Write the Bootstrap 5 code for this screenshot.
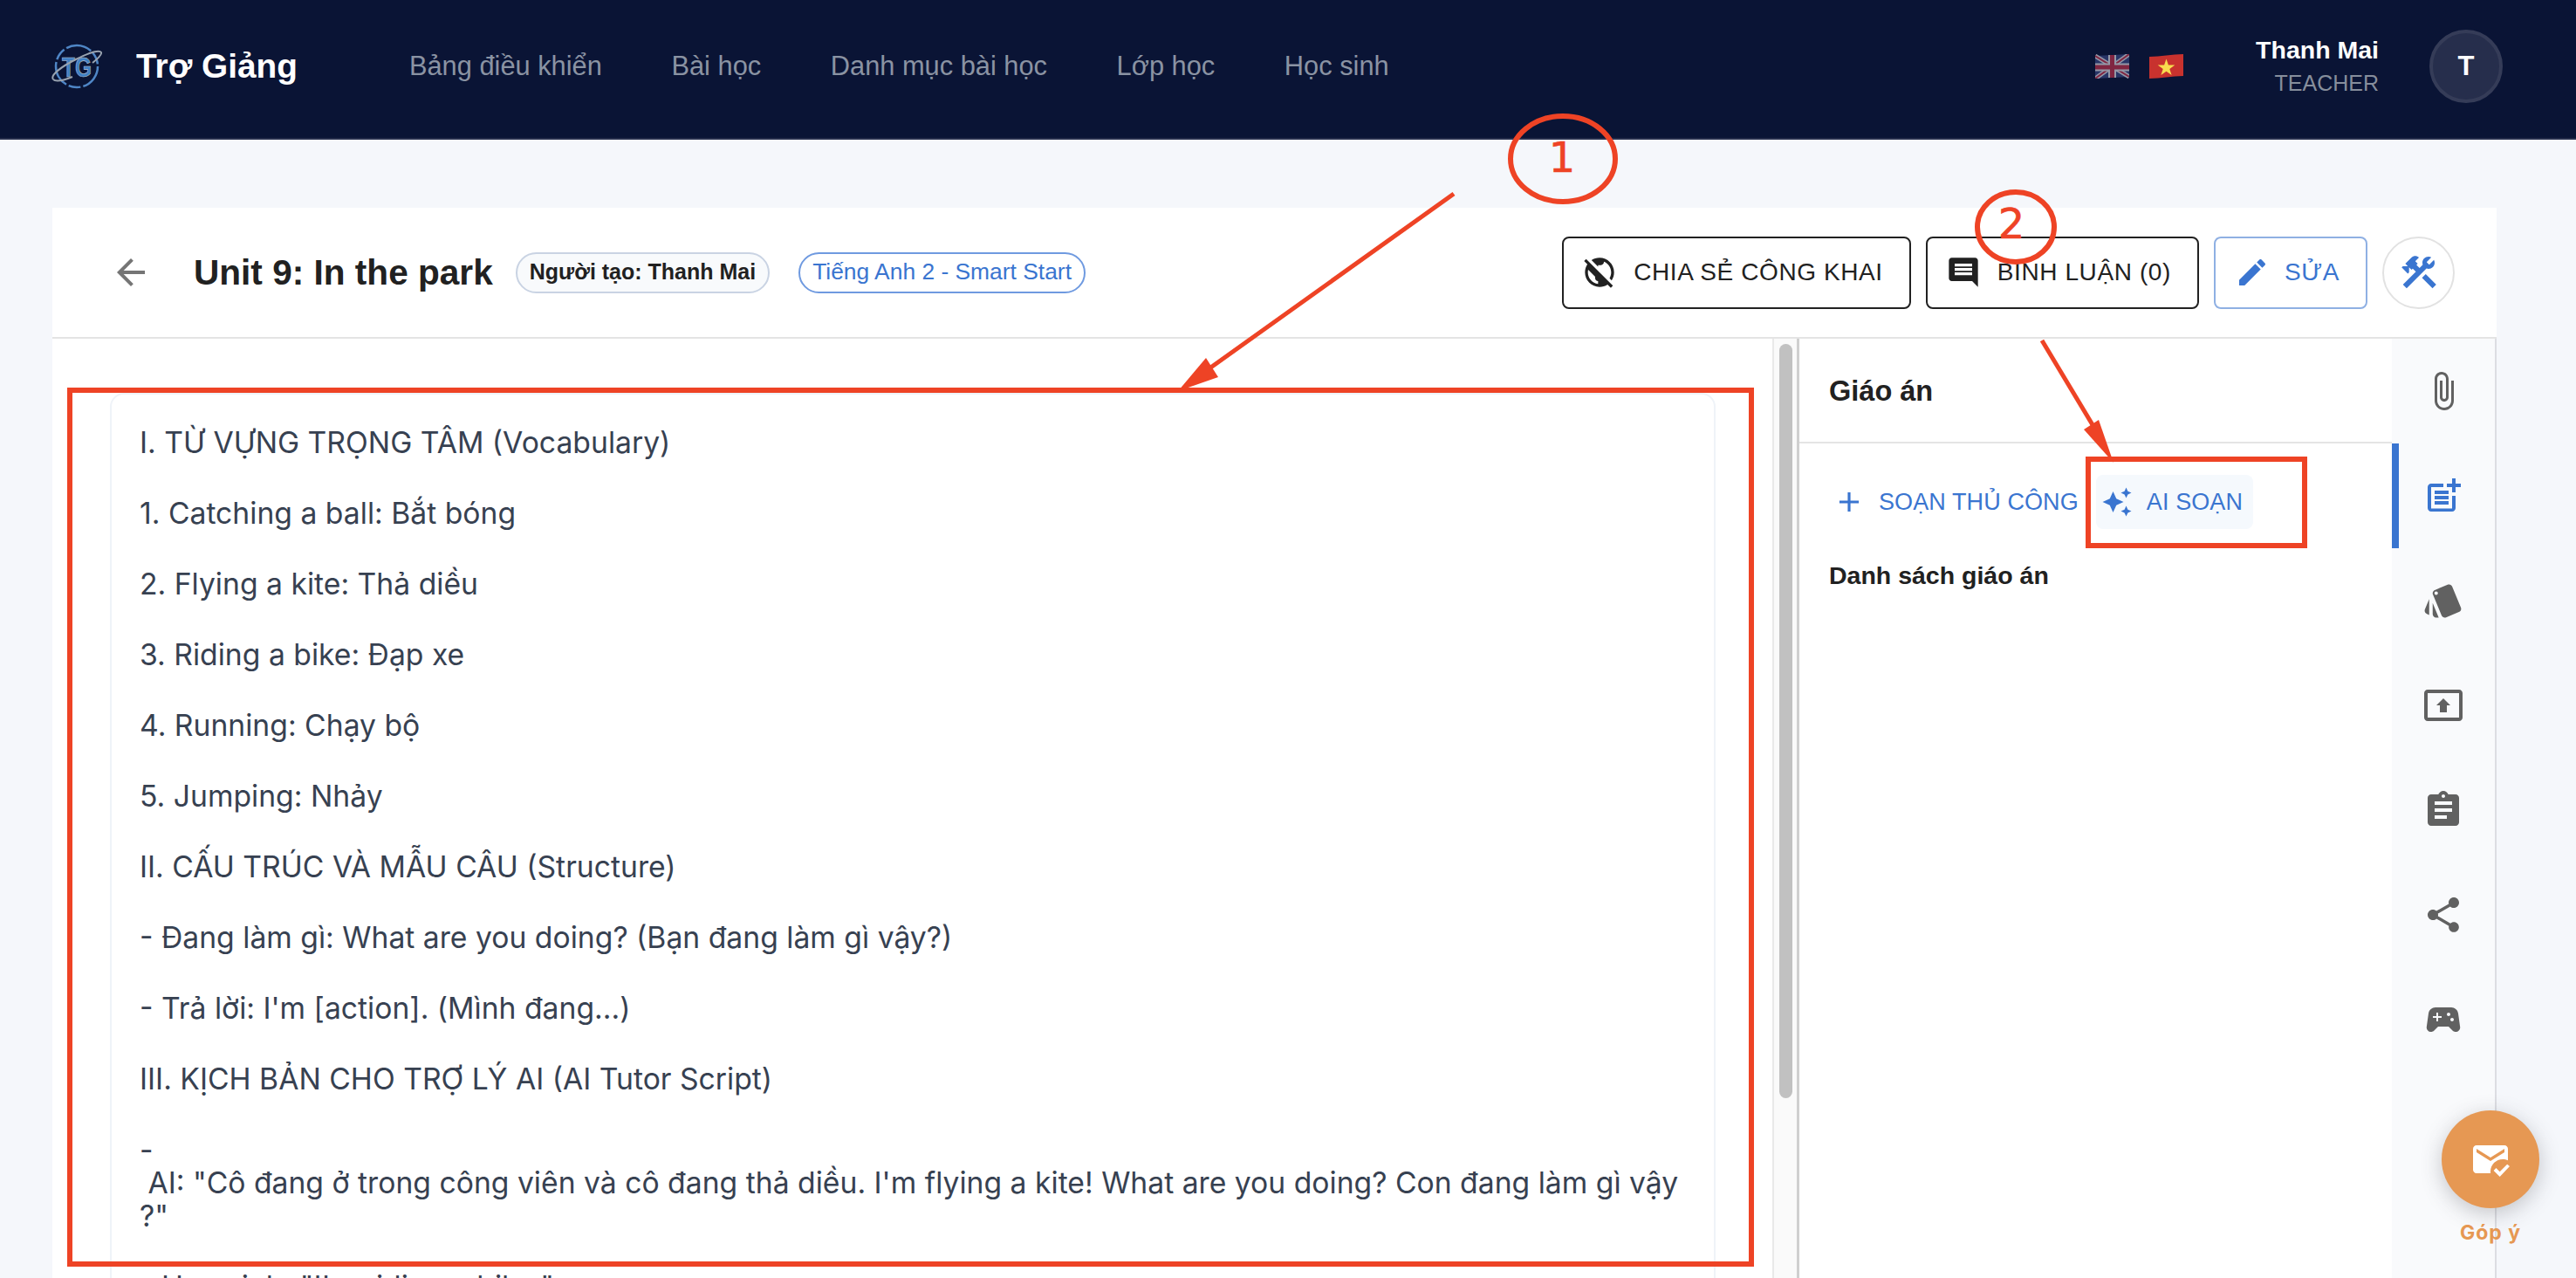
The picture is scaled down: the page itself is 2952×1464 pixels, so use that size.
<!doctype html>
<html lang="en">
<head>
<meta charset="utf-8">
<title>Trợ Giảng – Unit 9</title>
<link href="https://cdn.jsdelivr.net/npm/bootstrap@5.3.3/dist/css/bootstrap.min.css" rel="stylesheet">
<style>
    html, body { height: 1464px; overflow: hidden; }
    body { background: #f5f7fb; font-family: "Liberation Sans", Arial, sans-serif; color: #212121; position: relative; }
    svg { display: block; fill: currentColor; flex-shrink: 0; }

    /* top bar */
    .topbar { height: 160px; background: #0a1435; border-bottom: 2px solid #262e4c; padding: 0 84px 6px 59px; }
    .brand-name { font-size: 38.8px; font-weight: 700; color: #fff; margin-left: 39px; margin-right: 128px; }
    .menu-links { gap: 79.6px; }
    .menu-links a { font-size: 30.8px; color: #8a93a3; text-decoration: none; }
    .flags { gap: 23px; margin-right: 83px; }
    .who { margin-right: 58px; text-align: right; }
    .who-name { font-size: 28.5px; font-weight: 700; color: #fff; line-height: 38px; }
    .who-role { font-size: 25px; color: #868e9c; line-height: 38px; }
    .avatar { width: 84px; height: 84px; border-radius: 50%; background: #262e4c; border: 4px solid #353c58; color: #fff; font-size: 31px; font-weight: 700; }

    /* lesson card */
    .lesson-wrap { padding: 78px 91px 0 60px; }
    .lesson-head { height: 150px; background: #fff; border-bottom: 2px solid #e4e4e4; padding: 0 48px 0 66px; }
    .back-arrow { color: #757575; width: 48px; height: 48px; }
    .lesson-title { font-size: 40.6px; font-weight: 700; margin: 0 26px 0 48px; }
    .tag-pill { height: 47px; border-radius: 24px; display: flex; align-items: center; padding: 0 14px; border: 2px solid; }
    .tag-owner { background: #f8fafc; border-color: #c9d3e3; font-size: 25px; font-weight: 700; color: #212121; margin-right: 33px; }
    .tag-book { border-color: #6f9ae0; font-size: 26.4px; color: #3a75d0; }
    .act-row { gap: 17px; }
    .act-btn { height: 83px; border-radius: 8px; border: 2px solid #212121; background: #fff; font-size: 28px; letter-spacing: .6px; color: #212121; display: flex; align-items: center; gap: 19px; padding: 0 30px 0 21px; }
    .act-edit { border-color: #8fb0e3; color: #3a75d0; gap: 17px; padding-left: 22px; }
    .act-tools { width: 83px; border-color: #e2e2e2; color: #3a75d0; border-radius: 50%; padding: 0; justify-content: center; }

    .lesson-body { height: 1076px; background: #fff; }
    .doc-pane { width: 1971px; flex-shrink: 0; padding: 62px 65px 0 66px; overflow: hidden; }
    .doc-box { border: 2px solid #eff3f8; border-radius: 16px; padding: 36px 32px 0; height: 1200px; font-family: Inter, sans-serif; font-size: 33.7px; line-height: 38px; color: #374151; }
    .doc-box p { margin: 0 0 43px; }
    .scroll-track { width: 31px; flex-shrink: 0; background: #fafafa; border-left: 2px solid #e9e9e9; border-right: 3px solid #cfcfcf; padding: 6px 5px 0 6px; }
    .scroll-thumb { height: 864px; background: #c1c1c1; border-radius: 8px; }
    .side-panel { width: 0; }
    .side-head { height: 120px; border-bottom: 2px solid #e4e4e4; padding: 2px 0 0 34px; font-size: 32.5px; font-weight: 700; }
    .side-tools { height: 96px; margin-top: 19px; padding-left: 38px; }
    .soan-link { font-size: 27px; color: #3a75d0; letter-spacing: .1px; display: flex; align-items: center; }
    .soan-plus { margin-right: 15px; }
    .soan-ai { height: 62px; background: #f5f9fd; border-radius: 8px; margin-left: 20px; padding: 0 12px 0 6px; }
    .list-title { font-size: 28.5px; font-weight: 700; padding-left: 34px; margin-top: 15px; }
    .tool-rail { width: 120px; flex-shrink: 0; background: #f9fafc; border-right: 2px solid #dcdde2; }
    .rail-item { height: 120px; color: #616161; }
    .rail-active { color: #3a75d0; box-shadow: inset 8px 0 0 #3a75d0; }

    /* feedback button + annotations lie over the page */
    .feedback { position: absolute; left: 2798px; top: 1272px; width: 112px; text-align: center; }
    .feedback-dot { width: 112px; height: 112px; border-radius: 50%; background: #e69853; color: #fff; box-shadow: 0 6px 24px rgba(60,60,70,.28); }
    .feedback-label { font-family: Inter, sans-serif; font-size: 23px; font-weight: 700; letter-spacing: 1px; color: #e69853; margin-top: 15px; line-height: 26px; }
    .marks { position: absolute; left: 0; top: 0; pointer-events: none; }
    .marks text { font-family: "DejaVu Sans", sans-serif; font-size: 48px; fill: #ee4325; stroke: #ee4325; stroke-width: .6px; }
</style>
</head>
<body>

<!-- top bar -->
<nav class="topbar d-flex align-items-center">
    <svg width="58" height="52" viewBox="0 0 58 52" fill="none">
        <circle cx="29" cy="26" r="24" fill="none" stroke="#4f86c6" stroke-width="2.5" stroke-dasharray="30 3 14 3"/>
        <text x="29" y="38" text-anchor="middle" font-family="Liberation Sans" font-weight="700" font-size="32" textLength="34" lengthAdjust="spacingAndGlyphs" fill="#3f7fc4" stroke="#b9c3cf" stroke-width=".6">TG</text>
        <path d="M2 41C-2 36 12 26 28 18 44 10 55 7 57 10 58 13 52 18 47 22" fill="none" stroke="#99a3b0" stroke-width="2"/>
        <path d="M2 41C5 44 14 42 24 38" fill="none" stroke="#99a3b0" stroke-width="2"/>
    </svg>
    <span class="brand-name">Trợ Giảng</span>
    <div class="menu-links d-flex">
        <a href="#">Bảng điều khiển</a>
        <a href="#">Bài học</a>
        <a href="#">Danh mục bài học</a>
        <a href="#">Lớp học</a>
        <a href="#">Học sinh</a>
    </div>
    <div class="ms-auto d-flex align-items-center">
        <div class="flags d-flex">
            <svg width="39" height="28" viewBox="0 0 39 28" opacity=".62">
                <path d="M0 2 39 0V26L0 28Z" fill="#3b4a86"/>
                <path d="M0 2 39 26M39 0 0 28" stroke="#e9e9ee" stroke-width="5"/>
                <path d="M0 2 39 26M39 0 0 28" stroke="#c8324a" stroke-width="2"/>
                <path d="M19.5 1V27M0 15H39" stroke="#e9e9ee" stroke-width="9"/>
                <path d="M19.5 1V27M0 15H39" stroke="#c8324a" stroke-width="5"/>
            </svg>
            <svg width="39" height="28" viewBox="0 0 39 28">
                <path d="M0 3C13 3 26 0 39 0V25C26 25 13 28 0 28Z" fill="#c8322e"/>
                <path d="M19.5 5.5 21.9 12.6H29.3L23.3 17 25.6 24 19.5 19.7 13.4 24 15.7 17 9.7 12.6H17.1Z" fill="#f8dd4e"/>
            </svg>
        </div>
        <div class="who">
            <div class="who-name">Thanh Mai</div>
            <div class="who-role">TEACHER</div>
        </div>
        <div class="avatar d-flex align-items-center justify-content-center">T</div>
    </div>
</nav>

<!-- lesson -->
<div class="lesson-wrap">
    <div class="lesson-head d-flex align-items-center">
        <svg class="back-arrow" viewBox="0 0 24 24"><path d="M20 11H7.83l5.59-5.59L12 4l-8 8 8 8 1.41-1.41L7.83 13H20v-2z"/></svg>
        <span class="lesson-title">Unit 9: In the park</span>
        <span class="tag-pill tag-owner">Người tạo: Thanh Mai</span>
        <span class="tag-pill tag-book">Tiếng Anh 2 - Smart Start</span>
        <div class="ms-auto d-flex act-row">
            <button class="act-btn">
                <svg width="40" height="40" viewBox="0 0 24 24"><path d="M11 8.17L6.49 3.66C8.07 2.61 9.96 2 12 2c5.52 0 10 4.48 10 10 0 2.04-.61 3.93-1.66 5.51l-1.46-1.46C19.59 14.87 20 13.48 20 12c0-3.35-2.07-6.22-5-7.41V5c0 1.1-.9 2-2 2h-2v1.17zm10.19 13.02l-1.41 1.41-2.27-2.27C15.93 21.39 14.04 22 12 22 6.48 22 2 17.52 2 12c0-2.04.61-3.93 1.66-5.51L1.39 4.22 2.81 2.81l18.38 18.38zM11 18c-1.1 0-2-.9-2-2v-1l-4.79-4.79C4.08 10.79 4 11.38 4 12c0 4.08 3.05 7.44 7 7.93V18z"/></svg>
                CHIA SẺ CÔNG KHAI
            </button>
            <button class="act-btn">
                <svg width="40" height="40" viewBox="0 0 24 24"><path d="M21.99 4c0-1.1-.89-2-1.99-2H4c-1.1 0-2 .9-2 2v12c0 1.1.9 2 2 2h14l4 4-.01-18zM18 14H6v-2h12v2zm0-3H6V9h12v2zm0-3H6V6h12v2z"/></svg>
                BÌNH LUẬN (0)
            </button>
            <button class="act-btn act-edit">
                <svg width="40" height="40" viewBox="0 0 24 24"><path d="M3 17.25V21h3.75L17.81 9.94l-3.75-3.75L3 17.25zM20.71 7.04c.39-.39.39-1.02 0-1.41l-2.34-2.34c-.39-.39-1.02-.39-1.41 0l-1.83 1.83 3.75 3.75 1.83-1.83z"/></svg>
                SỬA
            </button>
            <button class="act-btn act-tools">
                <svg width="48" height="48" viewBox="0 0 24 24"><path d="M13.783 15.172l2.121-2.121 5.996 5.996-2.121 2.121z M17.5 10c1.93 0 3.5-1.57 3.5-3.5 0-.58-.16-1.12-.41-1.6l-2.7 2.7-1.49-1.49 2.7-2.7c-.48-.25-1.02-.41-1.6-.41C15.57 3 14 4.57 14 6.5c0 .41.08.8.21 1.16l-1.85 1.85-1.78-1.78.71-.71-1.41-1.41L12 3.49c-1.17-1.17-3.07-1.17-4.24 0L4.22 7.03l1.41 1.41H2.81l-.71.71 3.54 3.54.71-.71V9.15l1.41 1.41.71-.71 1.78 1.78-7.41 7.41 2.12 2.12L16.34 9.79c.36.13.75.21 1.16.21z"/></svg>
            </button>
        </div>
    </div>

    <div class="lesson-body d-flex">
        <div class="doc-pane">
            <div class="doc-box">
                <p>I. TỪ VỰNG TRỌNG TÂM (Vocabulary)</p>
                <p>1. Catching a ball: Bắt bóng</p>
                <p>2. Flying a kite: Thả diều</p>
                <p>3. Riding a bike: Đạp xe</p>
                <p>4. Running: Chạy bộ</p>
                <p>5. Jumping: Nhảy</p>
                <p>II. CẤU TRÚC VÀ MẪU CÂU (Structure)</p>
                <p>- Đang làm gì: What are you doing? (Bạn đang làm gì vậy?)</p>
                <p>- Trả lời: I'm [action]. (Mình đang...)</p>
                <p>III. KỊCH BẢN CHO TRỢ LÝ AI (AI Tutor Script)</p>
                <p>-<br>&nbsp;AI: "Cô đang ở trong công viên và cô đang thả diều. I'm flying a kite! What are you doing? Con đang làm gì vậy<br>?"</p>
                <p>- Học sinh: "I'm riding a bike."</p>
            </div>
        </div>
        <div class="scroll-track"><div class="scroll-thumb"></div></div>
        <div class="side-panel flex-grow-1">
            <div class="side-head d-flex align-items-center">Giáo án</div>
            <div class="side-tools d-flex align-items-center">
                <span class="soan-link">
                    <svg class="soan-plus" width="38" height="38" viewBox="0 0 24 24"><path d="M19 13h-6v6h-2v-6H5v-2h6V5h2v6h6v2z"/></svg>
                    SOẠN THỦ CÔNG
                </span>
                <span class="soan-link soan-ai">
                    <svg width="36" height="36" viewBox="0 0 24 24" class="me-3"><path d="M19 9l1.25-2.75L23 5l-2.75-1.25L19 1l-1.25 2.75L15 5l2.75 1.25L19 9zm-7.5.5L9 4 6.5 9.5 1 12l5.5 2.5L9 20l2.5-5.5L17 12l-5.5-2.5zM19 15l-1.25 2.75L15 19l2.75 1.25L19 23l1.25-2.75L23 19l-2.75-1.25L19 15z"/></svg>
                    AI SOẠN
                </span>
            </div>
            <div class="list-title">Danh sách giáo án</div>
        </div>
        <div class="tool-rail">
            <div class="rail-item d-flex align-items-center justify-content-center">
                <svg width="48" height="48" viewBox="0 0 24 24"><path d="M16.5 6v11.5c0 2.21-1.79 4-4 4s-4-1.79-4-4V5c0-1.38 1.12-2.5 2.5-2.5s2.5 1.12 2.5 2.5v10.5c0 .55-.45 1-1 1s-1-.45-1-1V6H10v9.5c0 1.38 1.12 2.5 2.5 2.5s2.5-1.12 2.5-2.5V5c0-2.21-1.79-4-4-4S7 2.79 7 5v12.5c0 3.04 2.46 5.5 5.5 5.5s5.5-2.46 5.5-5.5V6h-1.5z"/></svg>
            </div>
            <div class="rail-item rail-active d-flex align-items-center justify-content-center">
                <svg width="48" height="48" viewBox="0 0 24 24"><path d="M17 19.22H5V7h7V5H5c-1.1 0-2 .9-2 2v12c0 1.1.9 2 2 2h12c1.1 0 2-.9 2-2v-7h-2v7.22z"/><path d="M19 2h-2v3h-3c.01.01 0 2 0 2h3v2.99c.01.01 2 0 2 0V7h3V5h-3V2z"/><path d="M7 9h8v2H7zM7 12v2h8v-2h-3zM7 15h8v2H7z"/></svg>
            </div>
            <div class="rail-item d-flex align-items-center justify-content-center">
                <svg width="48" height="48" viewBox="0 0 24 24"><path d="M2.53 19.65l1.34.56v-9.03l-2.43 5.86c-.41 1.02.08 2.19 1.09 2.61zm19.5-3.7L17.07 3.98c-.31-.75-1.04-1.21-1.81-1.23-.26 0-.53.04-.79.15L7.1 5.95c-.75.31-1.21 1.03-1.23 1.8-.01.27.04.54.15.8l4.96 11.97c.31.76 1.05 1.22 1.83 1.23.26 0 .52-.05.77-.15l7.36-3.05c1.02-.42 1.51-1.59 1.09-2.6zM7.88 8.75c-.55 0-1-.45-1-1s.45-1 1-1 1 .45 1 1-.45 1-1 1zm-2 11c0 1.1.9 2 2 2h1.45l-3.45-8.34v6.34z"/></svg>
            </div>
            <div class="rail-item d-flex align-items-center justify-content-center">
                <svg width="48" height="48" viewBox="0 0 24 24"><path d="M21 3H3c-1.11 0-2 .89-2 2v14c0 1.11.89 2 2 2h18c1.11 0 2-.89 2-2V5c0-1.11-.89-2-2-2zm0 16.02H3V4.98h18v14.04zM10 12H8l4-4 4 4h-2v4h-4v-4z"/></svg>
            </div>
            <div class="rail-item d-flex align-items-center justify-content-center">
                <svg width="48" height="48" viewBox="0 0 24 24"><path d="M19 3h-4.18C14.4 1.84 13.3 1 12 1c-1.3 0-2.4.84-2.82 2H5c-1.1 0-2 .9-2 2v14c0 1.1.9 2 2 2h14c1.1 0 2-.9 2-2V5c0-1.1-.9-2-2-2zm-7 0c.55 0 1 .45 1 1s-.45 1-1 1-1-.45-1-1 .45-1 1-1zm2 14H7v-2h7v2zm3-4H7v-2h10v2zm0-4H7V7h10v2z"/></svg>
            </div>
            <div class="rail-item d-flex align-items-center justify-content-center">
                <svg width="48" height="48" viewBox="0 0 24 24"><path d="M18 16.08c-.76 0-1.44.3-1.96.77L8.91 12.7c.05-.23.09-.46.09-.7s-.04-.47-.09-.7l7.05-4.11c.54.5 1.25.81 2.04.81 1.66 0 3-1.34 3-3s-1.34-3-3-3-3 1.34-3 3c0 .24.04.47.09.7L8.04 9.81C7.5 9.31 6.79 9 6 9c-1.66 0-3 1.34-3 3s1.34 3 3 3c.79 0 1.5-.31 2.04-.81l7.12 4.16c-.05.21-.08.43-.08.65 0 1.61 1.31 2.92 2.92 2.92 1.61 0 2.92-1.31 2.92-2.92s-1.31-2.92-2.92-2.92z"/></svg>
            </div>
            <div class="rail-item d-flex align-items-center justify-content-center">
                <svg width="48" height="48" viewBox="0 0 24 24"><path d="M21.58 16.09l-1.09-7.66C20.21 6.46 18.52 5 16.53 5H7.47C5.48 5 3.79 6.46 3.51 8.43l-1.09 7.66C2.2 17.63 3.39 19 4.94 19c.68 0 1.32-.27 1.8-.75L9 16h6l2.25 2.25c.48.48 1.13.75 1.8.75 1.56 0 2.75-1.37 2.53-2.91zM11 11H9v2H8v-2H6v-1h2V8h1v2h2v1zm4-1c-.55 0-1-.45-1-1s.45-1 1-1 1 .45 1 1-.45 1-1 1zm2 3c-.55 0-1-.45-1-1s.45-1 1-1 1 .45 1 1-.45 1-1 1z"/></svg>
            </div>
        </div>
    </div>
</div>

<!-- floating feedback -->
<div class="feedback">
    <div class="feedback-dot d-flex align-items-center justify-content-center">
        <svg width="48" height="48" viewBox="0 0 24 24"><path d="M12 19c0-3.87 3.13-7 7-7 1.08 0 2.09.25 3 .68V6c0-1.1-.9-2-2-2H4c-1.1 0-2 .9-2 2v12c0 1.1.9 2 2 2h8.08c-.05-.33-.08-.66-.08-1zM4 6l8 5 8-5v2l-8 5-8-5V6zm13.34 16l-3.54-3.54 1.41-1.41 2.12 2.12 4.24-4.24L23 16l-5.66 6z"/></svg>
    </div>
    <div class="feedback-label">Góp ý</div>
</div>

<!-- red annotations drawn over the screenshot -->
<svg class="marks" width="2952" height="1464" viewBox="0 0 2952 1464" fill="none">
    <g stroke="#ee4325" fill="none">
        <ellipse cx="1791" cy="182" rx="60" ry="49" stroke-width="6"/>
        <ellipse cx="2310" cy="260" rx="44" ry="40" stroke-width="6"/>
        <rect x="80" y="447" width="1927" height="1001" stroke-width="6"/>
        <rect x="2393" y="526" width="248" height="99" stroke-width="6"/>
        <path d="M1666 222 1372 432" stroke-width="5"/>
        <path d="M2340 390 2412 510" stroke-width="5"/>
    </g>
    <path d="M1350 448 1382 410 1396 432Z" fill="#ee4325"/>
    <path d="M2422 530 2388 492 2405 481Z" fill="#ee4325"/>
    <text x="1790" y="197" text-anchor="middle">1</text>
    <text x="2305" y="273" text-anchor="middle">2</text>
</svg>

</body>
</html>
